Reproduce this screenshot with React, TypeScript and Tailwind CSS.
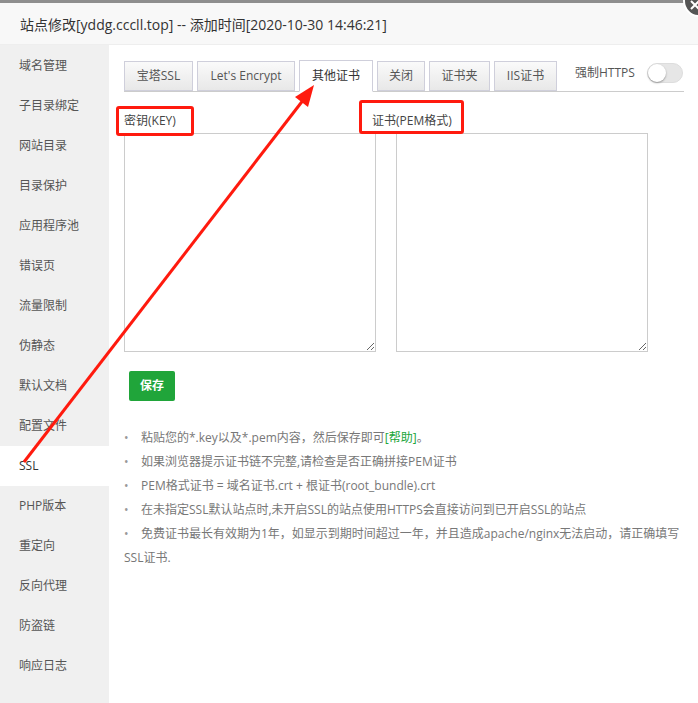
import React from "react";

const MENU = [
  "域名管理",
  "子目录绑定",
  "网站目录",
  "目录保护",
  "应用程序池",
  "错误页",
  "流量限制",
  "伪静态",
  "默认文档",
  "配置文件",
  "SSL",
  "PHP版本",
  "重定向",
  "反向代理",
  "防盗链",
  "响应日志",
];

const TABS = [
  { label: "宝塔SSL", w: "w-[69px]" },
  { label: "Let's Encrypt", w: "w-[98px]" },
  { label: "其他证书", w: "w-[74px]", active: true },
  { label: "关闭", w: "w-[48px]" },
  { label: "证书夹", w: "w-[61px]" },
  { label: "IIS证书", w: "w-[63px]" },
];

const FONT = { fontFamily: '"Open Sans", "Noto Sans CJK SC", sans-serif' };

export default function App() {
  return (
    <div
      className="relative w-[698px] h-[703px] overflow-hidden bg-white text-[12px] text-[#555]"
      style={FONT}
    >
      {/* top strip + title */}
      <div className="h-[3px] bg-[#8e8e8e]" />
      <div className="h-[42px] flex items-center pl-5 pt-px bg-[#f8f8f8] border-b border-[#eee] text-[14px] text-[#333]">
        站点修改[yddg.cccll.top] -- 添加时间[2020-10-30 14:46:21]
      </div>

      <div className="flex h-[658px]">
        {/* sidebar */}
        <div className="w-[109px] bg-[#f0f0f0] shrink-0 pt-px">
          {MENU.map((m) => (
            <div
              key={m}
              className={`h-10 flex items-center pl-[19px] ${
                m === "SSL" ? "bg-white text-[#333]" : "text-[#555]"
              }`}
            >
              {m}
            </div>
          ))}
        </div>

        {/* main */}
        <div className="flex-1 pl-[15px] pt-4">
          <div className="flex items-end w-[560px] h-[31px] border-b border-[#ccc]">
            <div className="flex items-end gap-[4px]">
              {TABS.map((t) => (
                <div
                  key={t.label}
                  className={`${t.w} flex items-center justify-center border border-[#cfcfdb] ${
                    t.active
                      ? "h-[32px] -mb-px bg-white border-b-white text-[#333]"
                      : "h-[30px] bg-gradient-to-b from-[#fafafa] to-[#e8e8e8] text-[#555]"
                  }`}
                >
                  {t.label}
                </div>
              ))}
            </div>
            <div className="ml-[18px] self-center flex items-center gap-3 -mt-[6px]">
              <span className="text-[#555]">强制HTTPS</span>
              <div className="relative w-9 h-5 rounded-full bg-[#e6e6e6] border border-[#ddd]">
                <div className="absolute left-0 top-0 w-[18px] h-[18px] rounded-full bg-white shadow-[0_1px_2px_rgba(0,0,0,0.35)]" />
              </div>
            </div>
          </div>

          {/* labels */}
          <div className="flex h-[41px] pt-[19px] leading-[20px] text-[#444]">
            <span className="w-[248px]">密钥(KEY)</span>
            <span>证书(PEM格式)</span>
          </div>

          {/* textareas */}
          <div className="flex gap-5">
            <textarea className="w-[252px] h-[219px] border border-[#ccc] outline-none" />
            <textarea className="w-[252px] h-[219px] border border-[#ccc] outline-none" />
          </div>

          <button
            type="button"
            className="mt-[19px] ml-[5px] w-[46px] h-[30px] rounded-[2px] bg-[#20a53a] text-white font-bold text-[12px]"
          >
            保存
          </button>

          <ul className="mt-[25px] w-[566px] text-[#777] leading-[24px]">
            <li>
              <span className="inline-block w-[17px] text-[#999]">•</span>
              粘贴您的*.key以及*.pem内容，然后保存即可
              <span className="text-[#20a53a]">[帮助]</span>。
            </li>
            <li>
              <span className="inline-block w-[17px] text-[#999]">•</span>
              如果浏览器提示证书链不完整,请检查是否正确拼接PEM证书
            </li>
            <li>
              <span className="inline-block w-[17px] text-[#999]">•</span>
              PEM格式证书 = 域名证书.crt + 根证书(root_bundle).crt
            </li>
            <li>
              <span className="inline-block w-[17px] text-[#999]">•</span>
              在未指定SSL默认站点时,未开启SSL的站点使用HTTPS会直接访问到已开启SSL的站点
            </li>
            <li>
              <span className="inline-block w-[17px] text-[#999]">•</span>
              免费证书最长有效期为1年，如显示到期时间超过一年，并且造成apache/nginx无法启动，请正确填写SSL证书.
            </li>
          </ul>
        </div>
      </div>

      {/* close button */}
      <div className="absolute -right-[17px] -top-[15px] w-[32px] h-[32px] rounded-full bg-[#555] border-2 border-white flex items-end justify-start">
        <svg width="14" height="14" viewBox="0 0 14 14" className="ml-[3px] mb-[3px]">
          <path d="M3 3 L11 11 M11 3 L3 11" stroke="#fff" strokeWidth="2" />
        </svg>
      </div>

      {/* annotation boxes */}
      <div className="absolute left-[116px] top-[106px] w-[78px] h-[30px] border-[3px] border-[#ff1a0e] rounded-[3px]" />
      <div className="absolute left-[359px] top-[100px] w-[105px] h-[34px] border-[3px] border-[#ff1a0e] rounded-[3px]" />

      {/* annotation arrow */}
      <svg className="absolute inset-0 pointer-events-none" width="698" height="703">
        <line x1="24" y1="462" x2="304" y2="99" stroke="#ff1a0e" strokeWidth="3" />
        <polygon points="314,85 308,107 295,97" fill="#ff1a0e" />
      </svg>
    </div>
  );
}
